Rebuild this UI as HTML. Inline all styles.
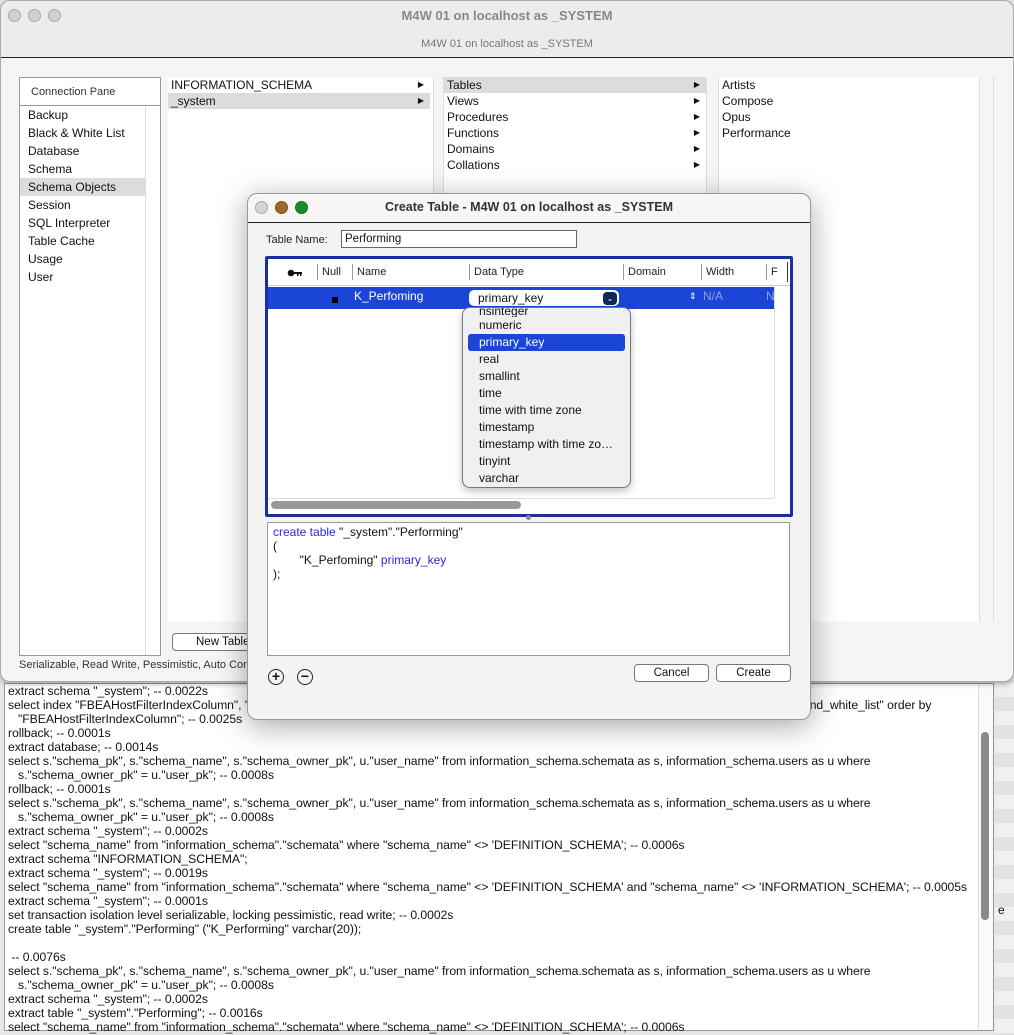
<!DOCTYPE html>
<html><head><meta charset="utf-8"><style>
*{box-sizing:border-box;margin:0;padding:0}
body{width:1014px;height:1035px;position:relative;overflow:hidden;background:#e6e6e6;font-family:"Liberation Sans",Arial,sans-serif;font-size:12px;color:#111}
.a{position:absolute}
.log{left:4px;top:683px;width:990px;height:348px;background:#fff;border:1px solid #999}
.log .t{white-space:pre;line-height:14px;font-size:12.2px;letter-spacing:-0.05px}
.stripes{left:995px;top:683px;width:19px;height:352px;background:repeating-linear-gradient(#f0f0f0 0 14px,#e2e2e2 14px 28px)}
.main{left:0;top:0;width:1014px;height:682px;background:#f5f5f5;border-radius:10px;border:1px solid #aaa;box-shadow:0 2px 6px rgba(0,0,0,.3)}
.dot{width:13px;height:13px;border-radius:50%;background:#d0d0d0;border:1px solid #aaa}
.item{line-height:18px;font-size:12px}
.br div{height:16px;line-height:16px;padding-left:3px;position:relative}
.br .s{background:#dcdcdc}
.br .ar:after{content:"▶";position:absolute;right:6px;font-size:8px;top:0}
.dlg{left:247px;top:193px;width:564px;height:527px;background:#f3f3f3;border:1px solid #999;border-radius:10px;box-shadow:0 6px 30px rgba(0,0,0,.35)}
.btn{background:#fff;border:1px solid #777;border-radius:4px;text-align:center;font-size:11.5px;line-height:16px}
.pop div{height:17px;line-height:17px;padding-left:16px;font-size:12px}
.hd{position:absolute;top:5px;height:16px;border-left:1px solid #999;padding-left:4px;line-height:16px}
</style></head><body>
<div class="a stripes"></div>
<div class="a log">
<div class="a t" style="left:3px;top:0">extract schema "_system"; -- 0.0022s
select index "FBEAHostFilterIndexColumn", "                                                                                                                                                                    _and_white_list" order by
   "FBEAHostFilterIndexColumn"; -- 0.0025s
rollback; -- 0.0001s
extract database; -- 0.0014s
select s."schema_pk", s."schema_name", s."schema_owner_pk", u."user_name" from information_schema.schemata as s, information_schema.users as u where
   s."schema_owner_pk" = u."user_pk"; -- 0.0008s
rollback; -- 0.0001s
select s."schema_pk", s."schema_name", s."schema_owner_pk", u."user_name" from information_schema.schemata as s, information_schema.users as u where
   s."schema_owner_pk" = u."user_pk"; -- 0.0008s
extract schema "_system"; -- 0.0002s
select "schema_name" from "information_schema"."schemata" where "schema_name" &lt;&gt; 'DEFINITION_SCHEMA'; -- 0.0006s
extract schema "INFORMATION_SCHEMA";
extract schema "_system"; -- 0.0019s
select "schema_name" from "information_schema"."schemata" where "schema_name" &lt;&gt; 'DEFINITION_SCHEMA' and "schema_name" &lt;&gt; 'INFORMATION_SCHEMA'; -- 0.0005s
extract schema "_system"; -- 0.0001s
set transaction isolation level serializable, locking pessimistic, read write; -- 0.0002s
create table "_system"."Performing" ("K_Performing" varchar(20));

 -- 0.0076s
select s."schema_pk", s."schema_name", s."schema_owner_pk", u."user_name" from information_schema.schemata as s, information_schema.users as u where
   s."schema_owner_pk" = u."user_pk"; -- 0.0008s
extract schema "_system"; -- 0.0002s
extract table "_system"."Performing"; -- 0.0016s
select "schema_name" from "information_schema"."schemata" where "schema_name" &lt;&gt; 'DEFINITION_SCHEMA'; -- 0.0006s</div>
<div class="a" style="left:973px;top:0;width:15px;height:346px;border-left:1px solid #ddd;background:#fafafa"></div>
<div class="a" style="left:976px;top:48px;width:8px;height:188px;border-radius:4px;background:#8a8a8a"></div>
</div>
<div class="a" style="left:998px;top:903px;font-size:12px">e</div>

<div class="a main">
 <div class="a" style="left:0;top:0;width:1012px;height:57px;background:#ececec;border-bottom:1px solid #222;border-radius:10px 10px 0 0"></div>
 <div class="a dot" style="left:7px;top:8px"></div>
 <div class="a dot" style="left:27px;top:8px"></div>
 <div class="a dot" style="left:47px;top:8px"></div>
 <div class="a" style="left:0;width:1012px;top:7px;text-align:center;font-weight:bold;font-size:13px;color:#888">M4W 01 on localhost as _SYSTEM</div>
 <div class="a" style="left:0;width:1012px;top:37px;text-align:center;font-size:11px;color:#777">M4W 01 on localhost as _SYSTEM</div>

 <div class="a" style="left:18px;top:76px;width:142px;height:579px;background:#fff;border:1px solid #999"></div>
 <div class="a" style="left:19px;top:77px;width:140px;height:28px;border-bottom:1px solid #999;background:#fff;font-size:11px;padding:8px 0 0 11px;color:#333">Connection Pane</div>
 <div class="a" style="left:144px;top:106px;width:1px;height:548px;background:#ddd"></div>
 <div class="a" style="left:19px;top:105px;width:125px">
  <div class="item" style="padding-left:8px">Backup</div>
  <div class="item" style="padding-left:8px">Black &amp; White List</div>
  <div class="item" style="padding-left:8px">Database</div>
  <div class="item" style="padding-left:8px">Schema</div>
  <div class="item" style="padding-left:8px;background:#dcdcdc">Schema Objects</div>
  <div class="item" style="padding-left:8px">Session</div>
  <div class="item" style="padding-left:8px">SQL Interpreter</div>
  <div class="item" style="padding-left:8px">Table Cache</div>
  <div class="item" style="padding-left:8px">Usage</div>
  <div class="item" style="padding-left:8px">User</div>
 </div>

 <div class="a" style="left:167px;top:76px;width:826px;height:545px;background:#fff"></div>
 <div class="a" style="left:432px;top:76px;width:11px;height:545px;background:#f5f5f5;border-left:1px solid #ddd;border-right:1px solid #ddd"></div>
 <div class="a" style="left:705px;top:76px;width:13px;height:545px;background:#f5f5f5;border-left:1px solid #ddd;border-right:1px solid #ddd"></div>
 <div class="a" style="left:978px;top:76px;width:15px;height:545px;background:#f5f5f5;border-left:1px solid #ddd;border-right:1px solid #ddd"></div>
 <div class="a br" style="left:167px;top:76px;width:262px">
  <div class="ar">INFORMATION_SCHEMA</div><div class="ar s">_system</div>
 </div>
 <div class="a br" style="left:443px;top:76px;width:262px">
  <div class="ar s">Tables</div><div class="ar">Views</div><div class="ar">Procedures</div><div class="ar">Functions</div><div class="ar">Domains</div><div class="ar">Collations</div>
 </div>
 <div class="a br" style="left:718px;top:76px;width:258px">
  <div>Artists</div><div>Compose</div><div>Opus</div><div>Performance</div>
 </div>
 <div class="a btn" style="left:171px;top:632px;width:90px;height:18px;text-align:left;padding-left:23px">New Table</div>
 <div class="a" style="left:18px;top:658px;font-size:11px;color:#333">Serializable, Read Write, Pessimistic, Auto Commit</div>
</div>

<div class="a dlg">
 <div class="a" style="left:0;top:0;width:562px;height:29px;border-bottom:1px solid #222;border-radius:10px 10px 0 0;background:#f6f6f6"></div>
 <div class="a dot" style="left:7px;top:7px;background:#d6d6d6"></div>
 <div class="a dot" style="left:27px;top:7px;background:#9c6a28;border-color:#7a521d"></div>
 <div class="a dot" style="left:47px;top:7px;background:#1c8a2a;border-color:#166e21"></div>
 <div class="a" style="left:0;width:562px;top:6px;text-align:center;font-weight:bold;font-size:12.5px;color:#333">Create Table - M4W 01 on localhost as _SYSTEM</div>
 <div class="a" style="left:18px;top:40px;font-size:11px;color:#222">Table Name:</div>
 <div class="a" style="left:93px;top:36px;width:236px;height:18px;background:#fff;border:1px solid #666;font-size:11.5px;padding:1px 3px;line-height:15px">Performing</div>

 <div class="a" style="left:17px;top:62px;width:528px;height:261px;border:3px solid #1a2f9a;background:#fff;border-radius:2px"></div>
 <div class="a" style="left:20px;top:65px;width:522px;height:27px;border-bottom:1px solid #ccc;font-size:11px;color:#222">
  <svg class="a" style="left:19px;top:10px" width="16" height="8"><circle cx="4" cy="4" r="3.3" fill="#111"/><rect x="6" y="3" width="9" height="2" fill="#111"/><rect x="10" y="5" width="1.5" height="2" fill="#111"/><rect x="13" y="5" width="1.5" height="2" fill="#111"/></svg>
  <div class="hd" style="left:49px">Null</div>
  <div class="hd" style="left:84px">Name</div>
  <div class="hd" style="left:201px">Data Type</div>
  <div class="hd" style="left:355px">Domain</div>
  <div class="hd" style="left:433px">Width</div>
  <div class="hd" style="left:498px">F</div>
  <div class="a" style="left:519px;top:3px;width:1px;height:20px;background:#333"></div>
 </div>
 <div class="a" style="left:20px;top:93px;width:506px;height:22px;background:#1a45d6"></div>
 <div class="a" style="left:84px;top:103px;width:6px;height:6px;background:#000"></div>
 <div class="a" style="left:106px;top:95px;color:#fff;font-size:12px">K_Perfoming</div>
 <div class="a" style="left:221px;top:96px;width:150px;height:16px;background:#fff;border-radius:5px;font-size:12px;padding-left:9px;line-height:17px">primary_key</div>
 <div class="a" style="left:355px;top:98px;width:14px;height:13px;background:#0e2a5c;border-radius:4px;color:#fff;font-size:8px;text-align:center;line-height:13px">⌄</div>
 <div class="a" style="left:441px;top:97px;color:#fff;font-size:9px">⇕</div>
 <div class="a" style="left:455px;top:95px;color:#8aa0e8;font-size:12px">N/A</div>
 <div class="a" style="left:518px;top:95px;color:#8aa0e8;font-size:12px">N</div>
 <div class="a" style="left:526px;top:93px;width:1px;height:212px;background:#ddd"></div>
 <div class="a" style="left:20px;top:304px;width:506px;height:1px;background:#ddd"></div>
 <div class="a" style="left:23px;top:307px;width:250px;height:8px;background:#999;border-radius:4px"></div>
 <div class="a" style="left:278px;top:321px;width:5px;height:5px;background:#888;border-radius:50%"></div>

 <div class="a pop" style="left:214px;top:113px;width:169px;height:181px;background:#f0f0f0;border:1px solid #777;border-radius:8px;overflow:hidden;box-shadow:0 3px 8px rgba(0,0,0,.25)">
  <div style="height:9px;line-height:0;overflow:hidden;position:relative"><span style="position:absolute;top:-3px;left:16px;line-height:12px">nsinteger</span></div>
  <div>numeric</div>
  <div style="background:#1a45d6;color:#fff;margin:0 5px;padding-left:11px;border-radius:3px">primary_key</div>
  <div>real</div><div>smallint</div><div>time</div><div>time with time zone</div><div>timestamp</div><div>timestamp with time zo…</div><div>tinyint</div><div>varchar</div>
 </div>

 <div class="a" style="left:19px;top:328px;width:523px;height:134px;background:#fff;border:1px solid #999;font-size:12px;line-height:14px;padding:2px 5px;white-space:pre"><span style="color:#2a2acc">create table</span> "_system"."Performing"
(
        "K_Perfoming" <span style="color:#2a2acc">primary_key</span>
);</div>
 <div class="a" style="left:20px;top:475px;width:16px;height:16px;border:1.5px solid #222;border-radius:50%;text-align:center;line-height:13px;font-size:14px;font-weight:bold">+</div>
 <div class="a" style="left:49px;top:475px;width:16px;height:16px;border:1.5px solid #222;border-radius:50%;text-align:center;line-height:12px;font-size:14px;font-weight:bold">−</div>
 <div class="a btn" style="left:386px;top:470px;width:75px;height:18px">Cancel</div>
 <div class="a btn" style="left:468px;top:470px;width:75px;height:18px">Create</div>
</div>
</body></html>
